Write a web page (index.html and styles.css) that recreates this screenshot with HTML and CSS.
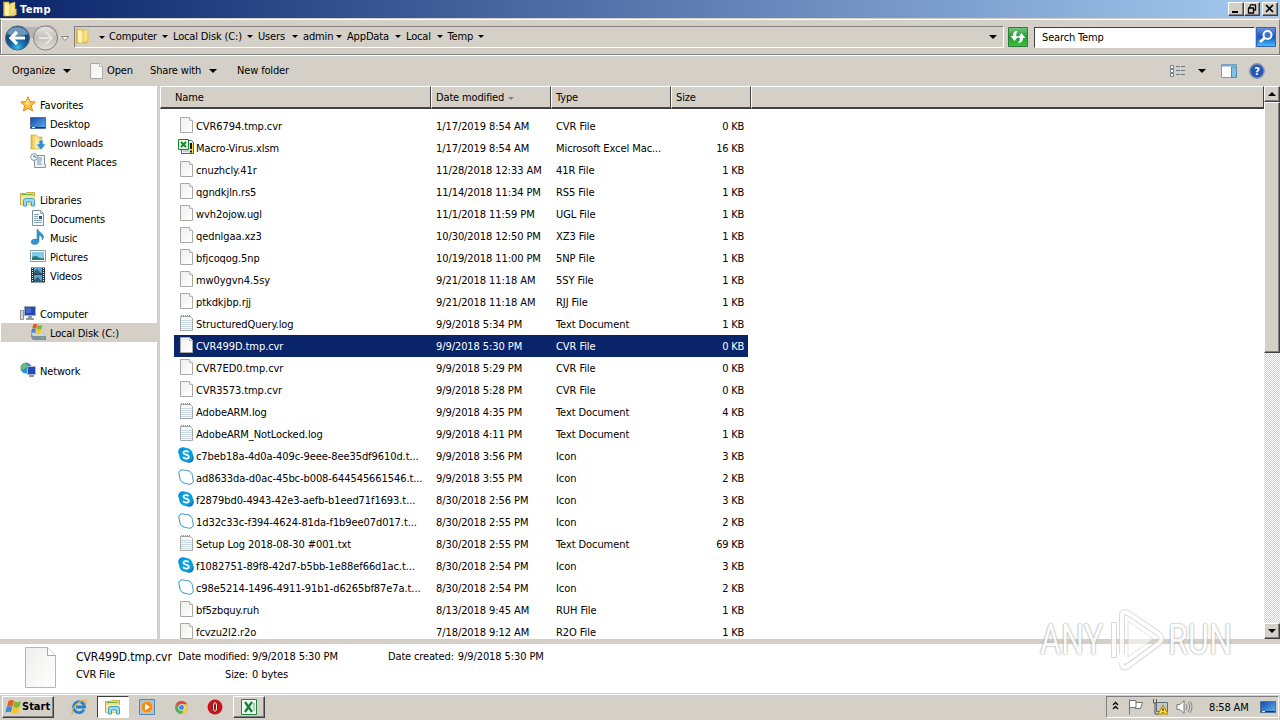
FILE: index.html
```html
<!DOCTYPE html>
<html lang="en">
<head>
  <meta charset="UTF-8">
  <title>Temp</title>
  <link rel="stylesheet" href="styles.css">
</head>
<body>
  <svg class="defs">
    <defs>
      <linearGradient id="gold"><stop offset="0" stop-color="#e3b93c"/><stop offset=".5" stop-color="#fff0a0"/><stop offset="1" stop-color="#dcb54a"/></linearGradient>
      <linearGradient id="screen" x2="1" y2="1"><stop offset="0" stop-color="#1746a8"/><stop offset="1" stop-color="#5eb3f2"/></linearGradient>
      <linearGradient id="paper" x2="1" y2="1"><stop offset="0" stop-color="#eeeeec"/><stop offset="1" stop-color="#fff"/></linearGradient>
      <radialGradient id="back" cy=".9"><stop offset="0" stop-color="#35c4ef"/><stop offset=".5" stop-color="#1b73b3"/><stop offset="1" stop-color="#164d82"/></radialGradient>
      <linearGradient id="glass" x2="0" y2="1"><stop offset="0" stop-color="#e8e6e3"/><stop offset=".5" stop-color="#c2beba"/><stop offset="1" stop-color="#e4e1dc"/></linearGradient>
      <linearGradient id="green" x2="0" y2="1"><stop offset="0" stop-color="#73c877"/><stop offset=".5" stop-color="#249b35"/><stop offset="1" stop-color="#39c636"/></linearGradient>
      <linearGradient id="blue" x2="0" y2="1"><stop offset="0" stop-color="#6e92e3"/><stop offset=".5" stop-color="#1756c5"/><stop offset="1" stop-color="#43c3f5"/></linearGradient>
    </defs>
    <symbol id="i-folder" viewBox="0 0 16 16"><path d="M1.500 1H7v2h5v12H1.500z" fill="url(#gold)" stroke="#c89d2f" stroke-width=".6"/><path d="M8 2.500l5-1.500v12l-5 2z" fill="#f6df7d" stroke="#d3ab40" stroke-width=".5"/><path d="M13 8l1.500-.5V14L11 15z" fill="#e8cc66"/><path d="M3 2l3 2v11l-3-1z" fill="#fff3b4"/></symbol>
    <symbol id="i-file" viewBox="0 0 16 16"><path d="M2.500.5h9l3 3v12h-12z" fill="url(#paper)" stroke="#a8a8a8"/><path d="M11.500.500v3h3" fill="#fff" stroke="#b6b6b6"/></symbol>
    <symbol id="i-log" viewBox="0 0 16 16"><path d="M2.500 1.500h10l2 2v12h-12z" fill="#f5f9fb" stroke="#a5a9aa"/><path d="M3 5.500h11M3 7.500h11M3 9.500h11M3 11.500h11M3 13.500h11" stroke="#cadbe3"/><path d="M3 1h9" stroke="#999" stroke-width="2" stroke-dasharray="1 1"/></symbol>
    <symbol id="i-skype" viewBox="0 0 16 16"><circle cx="5" cy="5" r="4.800" fill="#0a8fd8"/><circle cx="11" cy="11" r="4.800" fill="#0877bd"/><circle cx="8" cy="8" r="6.900" fill="#079fe0"/><path d="M10.800 5.200C9 3.500 5.300 4 5.500 6c.2 2 5.300 1.300 5.300 3.700 0 2.200-4 2.500-5.800.5" fill="none" stroke="#fff" stroke-width="1.800"/></symbol>
    <symbol id="i-skype-o" viewBox="0 0 16 16"><path d="M4.500.8c1.500 0 2 .7 4 .7 4 0 6 3 6 6.200 0 1.500.8 2.200.8 3.800 0 2.500-2 3.800-4 3.700-1.500 0-2-.7-4-.8C4 14 1.700 11.500 1.700 8 1.700 6.500.8 6 .8 4.300.8 2.200 2.500.8 4.500.8z" fill="#fff" stroke="#318bc4"/></symbol>
    <symbol id="i-xlsm" viewBox="0 0 16 16"><path d="M6.500 1.500h7l2 2v11h-12v-5z" fill="#e9f0fb" stroke="#49679d"/><path d="M8 5h6M8 8h6M5 12h9" stroke="#91acd4"/><path d="M.5.500h10v10H.5z" fill="#e3f5df" stroke="#16852b"/><path d="M3 3l5 5M8 3L3 8" stroke="#168532" stroke-width="1.800"/><path d="M11 4h4v10h-4z" fill="#ffe24f"/><path d="M13 4v6M13 11.500v2" stroke="#171717" stroke-width="2"/></symbol>
    <symbol id="i-star" viewBox="0 0 16 16"><path d="M8 .7l2.100 4.900 5.200.4-4 3.500 1.200 5.500L8 12.200 3.500 15l1.200-5.500L.7 6l5.200-.4z" fill="#ffc13b" stroke="#e48a18"/><path d="M8 3l1.500 4L8 10 5 7z" fill="#ffe68c"/></symbol>
    <symbol id="i-desktop" viewBox="0 0 16 16"><path d="M.5 2.500h15v11H.5z" fill="url(#screen)" stroke="#536e94"/><path d="M1 12.500h14" stroke="#17346c"/><path d="M2 12.500h3" stroke="#e6f1fb"/></symbol>
    <symbol id="i-download" viewBox="0 0 16 16"><path d="M1 1h6v2h5v12H1z" fill="url(#gold)" stroke="#c99d2e" stroke-width=".6"/><path d="M9 6h4v4h3l-5 6-5-6h3z" fill="#318dd4" stroke="#fff" stroke-width=".6"/></symbol>
    <symbol id="i-recent" viewBox="0 0 16 16"><path d="M4.500 2.500h10v9h1v3h-11z" fill="#edf2f4" stroke="#8295a0"/><path d="M7 5h5M7 7h5M7 9h4M7 11h5" stroke="#7c9bac"/><circle cx="4" cy="4" r="3.400" fill="#eef7fb" stroke="#8798a2"/><path d="M4 2v2h2" fill="none" stroke="#55748a"/></symbol>
    <symbol id="i-library" viewBox="0 0 16 16"><path d="M.5 2.500h5l1-1h8v12H.5z" fill="#f4dc77" stroke="#cda739"/><path d="M2 3.500h11" stroke="#6aae50"/><path d="M1 5.500h14v8H1z" fill="#fae99f"/><path d="M3.500 15V9.500q0-2 2-2h7q2 0 2 2V15h-3v-4h-5v4z" fill="#9ad8f5" stroke="#409fc9"/></symbol>
    <symbol id="i-doc" viewBox="0 0 16 16"><path d="M2.500.5h8l3 3v12h-11z" fill="#fbfdff" stroke="#7e8f9c"/><path d="M10.500.5v3h3M4 4.500h5M4 6.500h4M4 8.500h4M4 10.500h8M4 12.500h8" fill="none" stroke="#86a5bd"/><path d="M9 6h3v3H9z" fill="#275a92"/></symbol>
    <symbol id="i-music" viewBox="0 0 16 16"><path d="M8 .5c1 3.500 5.500 3.500 5.500 7.500 0 1-.5 2-1.500 3 .7-3-1-4.500-3-4.500V12c0 2.200-1.900 3.500-4.300 3.500S1 14.300 1.200 12.500c.3-2 3-3 5.800-2V.500z" fill="#3295d4" stroke="#1a70ae" stroke-width=".5"/></symbol>
    <symbol id="i-picture" viewBox="0 0 16 16"><path d="M.5 2.500h15v11H.5z" fill="#fff" stroke="#8c9aa1"/><path d="M2 4h12v8H2z" fill="#83cae9"/><path d="M2 9q4-2 6 0t6 1v2H2z" fill="#258070"/></symbol>
    <symbol id="i-video" viewBox="0 0 16 16"><path d="M1 .5h14v15H1z" fill="#263845"/><path d="M4 1h8v6H4zM4 8h8v7H4z" fill="#5aa5d2"/><path d="M4 5l3-3 5 5H4zM4 13l4-3 4 5H4z" fill="#315e78"/><path d="M2.500 1v14M13.500 1v14" stroke="#fff" stroke-dasharray="1 1"/></symbol>
    <symbol id="i-computer" viewBox="0 0 16 16"><path d="M.5 5.500h3v9h-3z" fill="#d2d7da" stroke="#89949a"/><path d="M4.500 1.500h11v9h-11z" fill="#2348b0" stroke="#a5abc4"/><path d="M6 3h5v5H6z" fill="#4967cb"/><path d="M8 11h4v2h2v2H6v-2h2z" fill="#929a9f"/></symbol>
    <symbol id="i-disk" viewBox="0 0 16 16"><path d="M1 9h12l3 3v4H3l-2-3z" fill="#7d919a"/><path d="M1 9h12l3 3H3z" fill="#ced5d7"/><path d="M11 14h3" stroke="#5de74f"/><use href="#i-flag" x="1" y="-1" width="12" height="12"/></symbol>
    <symbol id="i-flag" viewBox="0 0 16 16"><path d="M3 2q3-2 5.500 0L7 7.500q-2-1.500-5.500 0z" fill="#e75b21"/><path d="M9 2.500q3 1.500 6.500 0L14 8q-3 1.500-6.500 0z" fill="#7dba31"/><path d="M1.200 8q3-1.500 5.500 0L5.500 13.500Q3.500 12 0 13.500z" fill="#3f88d5"/><path d="M7.200 8.500q3 1.500 6.500 0L12.500 14q-3 1.500-6.500 0z" fill="#f8c529"/></symbol>
    <symbol id="i-network" viewBox="0 0 16 16"><circle cx="6" cy="6" r="5.500" fill="#3095c3"/><path d="M2 2l4-1 1 3-4 4-2-2z" fill="#70bd75"/><path d="M7.500 4.500h8v8h-8z" fill="#234db5" stroke="#b2b9cc"/><path d="M9 13h5v2H9z" fill="#8b949c"/></symbol>
  </svg>

  <div class="titlebar">
    <svg class="icon"><use href="#i-folder"/></svg>
    <span class="title">Temp</span>
    <div class="window-buttons">
      <span class="raised"><svg width="12" height="10"><path d="M2 8h6" stroke="#000" stroke-width="2"/></svg></span>
      <span class="raised"><svg width="12" height="10"><path d="M4 .8h6M4 3.500V1.500M9.500 1v5H8M2 4h6M2.500 4v5h5V4" fill="none" stroke="#000" stroke-width="1.300"/></svg></span>
      <span class="raised close"><svg width="12" height="10"><path d="M2 1l7 7M9 1L2 8" stroke="#000" stroke-width="1.700"/></svg></span>
    </div>
  </div>

  <div class="navbar">
    <svg class="nav-buttons" width="70" height="29" viewBox="0 0 70 29">
      <path d="M17 2q14 4 28 0 12 0 12 13H14z" fill="#b5b4b6"/>
      <circle cx="16.500" cy="15" r="12" fill="url(#back)" stroke="#4a6883"/>
      <path d="M6 11q2-7 10-7t11 7q-10 4-21 0z" fill="#9dbcd5" opacity=".65"/>
      <path d="M24 15H10m6-6l-6 6 6 6" fill="none" stroke="#fff" stroke-width="3.200"/>
      <circle cx="44.500" cy="15" r="12" fill="url(#glass)" stroke="#85817d"/>
      <path d="M38 15h13m-6-6l6 6-6 6" fill="none" stroke="#e7e5e2" stroke-width="2"/>
      <path d="M60.500 13.500h7l-3.500 4z" fill="#fff" stroke="#888"/>
    </svg>
    <div class="address">
      <svg class="icon"><use href="#i-folder"/></svg>
      <i class="arrow first"></i>
      <span class="crumb w55">Computer</span><span class="crumb w77">Local Disk (C:)</span><span class="crumb w37">Users</span><span class="crumb w37b">admin</span><span class="crumb w51">AppData</span><span class="crumb w34">Local</span><span class="crumb w34">Temp</span>
      <i class="arrow big"></i>
    </div>
    <svg class="refresh" width="20" height="20"><path d="M.5.500h19v19H.5z" fill="url(#green)" stroke="#347b3b"/><path d="M9.500 4Q5 3.500 5 9H2.500l4 5 4-5H8q0-3 1.500-5zM10 16q5 0 5-5h2.500l-4-5-4 5H12q0 3-2 5z" fill="#fff"/></svg>
    <div class="search">Search Temp</div>
    <svg class="search-button" width="20" height="20"><path d="M.5.500h19v19H.5z" fill="url(#blue)" stroke="#385eaf"/><circle cx="11.500" cy="8" r="4" fill="#3f75ca" stroke="#fff" stroke-width="2"/><path d="M8.500 11L4 15" stroke="#fff" stroke-width="2.600"/></svg>
  </div>

  <div class="toolbar">
    <span class="organize">Organize</span><i class="arrow big"></i>
    <svg class="icon open-icon"><use href="#i-file"/></svg><span class="open">Open</span>
    <span class="share">Share with</span><i class="arrow big"></i>
    <span class="new-folder">New folder</span>
    <div class="tools">
      <svg width="16" height="14"><path d="M.5 1.500h3v3h-3zM.5 5.500h3v3h-3zM.5 9.500h3v3h-3z" fill="#fff" stroke="#748087"/><path d="M6 2.500h4m1 0h4M6 6.500h4m1 0h4M6 10.500h4m1 0h4" stroke="#667984"/></svg>
      <i class="arrow big"></i>
      <svg class="pane-icon" width="17" height="14"><path d="M.5.500h15v13H.5z" fill="#fff" stroke="#6d9dbb"/><path d="M1 1.500h15" stroke="#75a9c8" stroke-width="2"/><path d="M10.500 3h5v10.500h-5z" fill="#80bfe2" stroke="#4c8fb5"/></svg>
      <svg class="help-icon" width="16" height="16"><circle cx="8" cy="8" r="7.200" fill="#2856b5" stroke="#8793ae" stroke-width="1.500"/><text x="8" y="12" text-anchor="middle">?</text></svg>
    </div>
  </div>

  <div class="main">
    <div class="sidebar">
      <div class="side-item"><svg class="icon"><use href="#i-star"/></svg><span>Favorites</span></div>
      <div class="side-item child"><svg class="icon"><use href="#i-desktop"/></svg><span>Desktop</span></div>
      <div class="side-item child"><svg class="icon"><use href="#i-download"/></svg><span>Downloads</span></div>
      <div class="side-item child"><svg class="icon"><use href="#i-recent"/></svg><span>Recent Places</span></div>
      <div class="side-item group"><svg class="icon"><use href="#i-library"/></svg><span>Libraries</span></div>
      <div class="side-item child"><svg class="icon"><use href="#i-doc"/></svg><span>Documents</span></div>
      <div class="side-item child"><svg class="icon"><use href="#i-music"/></svg><span>Music</span></div>
      <div class="side-item child"><svg class="icon"><use href="#i-picture"/></svg><span>Pictures</span></div>
      <div class="side-item child"><svg class="icon"><use href="#i-video"/></svg><span>Videos</span></div>
      <div class="side-item group"><svg class="icon"><use href="#i-computer"/></svg><span>Computer</span></div>
      <div class="side-item child active"><svg class="icon"><use href="#i-disk"/></svg><span>Local Disk (C:)</span></div>
      <div class="side-item group"><svg class="icon"><use href="#i-network"/></svg><span>Network</span></div>
    </div>
    <div class="content">
      <div class="columns">
        <div class="col name">Name</div><div class="col date">Date modified<i class="arrow sort"></i></div><div class="col type">Type</div><div class="col size">Size</div><div class="col rest"></div>
      </div>
      <div class="rows" id="rows"></div>
    </div>
    <div class="scrollbar">
      <span class="raised"><i class="arrow up"></i></span>
      <span class="raised thumb"></span>
      <span class="track"></span>
      <span class="raised"><i class="arrow big"></i></span>
    </div>
  </div>

  <div class="details">
    <svg class="big-file" width="32" height="41"><path d="M.5.500h22l8 8v32H.5z" fill="url(#paper)" stroke="#b5b5b5"/><path d="M22.500.500v8h8" fill="#fff" stroke="#aaa"/></svg>
    <div class="detail-name"><div class="file-title">CVR499D.tmp.cvr</div><div>CVR File</div></div>
    <div class="detail-labels"><div>Date modified:</div><div>Size:</div></div>
    <div class="detail-values"><div>9/9/2018 5:30 PM</div><div>0 bytes</div></div>
    <div class="detail-created">Date created: <span>9/9/2018 5:30 PM</span></div>
  </div>

  <div class="taskbar">
    <div class="start raised"><svg width="17" height="16"><use href="#i-flag"/></svg><b>Start</b></div>
    <div class="task"><svg width="16" height="16"><path d="M13 10.500A5.500 5.500 0 1 1 13.500 8H5" fill="none" stroke="#2680ce" stroke-width="2.800"/><path d="M1.500 15C-1 10 10-1 15 2q1 1-1 4" fill="none" stroke="#e3b33d" stroke-width="1.300"/></svg></div>
    <div class="task pressed"><svg class="icon"><use href="#i-library"/></svg></div>
    <div class="task"><svg width="16" height="16"><path d="M.5.500h15v15H.5z" fill="#9bc6e6" stroke="#5287b7"/><circle cx="8" cy="8" r="6" fill="#f58b17" stroke="#fbc27d"/><path d="M6 4.500l5 3.500-5 3.500z" fill="#fff"/></svg></div>
    <div class="task"><svg width="13" height="13" viewBox="0 0 16 16"><circle cx="8" cy="8" r="8" fill="#4daf51"/><path d="M1 4a8 8 0 0 1 14 0H8L5 8z" fill="#e54b3c"/><path d="M15 4a8 8 0 0 1-7 12l4-8-2-4z" fill="#f9cc35"/><circle cx="8" cy="8" r="3.700" fill="#4387ea" stroke="#fff"/></svg></div>
    <div class="task"><svg width="16" height="16"><circle cx="8" cy="8" r="7.500" fill="#c9151c"/><ellipse cx="8" cy="8" rx="2.500" ry="5.200" fill="#fff" stroke="#80090d"/><ellipse cx="8" cy="8" rx="1" ry="4" fill="#8c1015"/></svg></div>
    <div class="task excel raised"><svg width="16" height="16"><path d="M.5.500h15v15H.5z" fill="#effaef" stroke="#26823c"/><path d="M4 3l7 10M11 3L4 13" stroke="#168237" stroke-width="2.300"/><path d="M13 4v8" stroke="#5eaf6a"/></svg></div>
    <div class="tray">
      <svg class="chevrons" width="7" height="10"><path d="M1 4l2.500-2.500L6 4M1 8l2.500-2.500L6 8" fill="none" stroke="#000" stroke-width="1.300"/></svg>
      <svg class="tray-flag" width="16" height="16"><path d="M1.500.500v15M2 1.500h6v7H2M8 3.500h6.500l-2 6H7" fill="#fff" stroke="#77736e"/></svg>
      <svg class="tray-net" width="17" height="16"><path d="M4.500 3.500h11v9h-11z" fill="#bfc8cc" stroke="#606b73"/><path d="M1.500 0v4h3V0M3 4v11h4" fill="none" stroke="#555"/><path d="M10 6l5 9H5z" transform="translate(1)" fill="#ffdc21" stroke="#b58500"/><path d="M11 9v3M11 13v1" stroke="#222"/></svg>
      <svg class="tray-sound" width="17" height="14"><path d="M1 4.500h3l4-4v13l-4-4H1z" fill="#fff" stroke="#777"/><path d="M10 4q2 3 0 6M12 2q3.500 5 0 10M14 1q4 6 0 12" fill="none" stroke="#888"/></svg>
      <span class="clock">8:58 AM</span>
      <svg class="icon"><use href="#i-desktop"/></svg>
    </div>
  </div>

  <div class="watermark">
    <span>ANY</span>
    <svg width="58" height="64"><path d="M7 50V14M15 46V8q0-6 6-3l31 21q5 5 0 9L21 58q-6 4-6-3" fill="none" stroke="#d2d2d2" stroke-width="6"/><path d="M7 49V15M15 46V8q0-6 6-3l31 21q5 5 0 9L21 58q-6 4-6-3" fill="none" stroke="#fff" stroke-width="4"/><path d="M21 13l25 18-25 18z" fill="#fff" fill-opacity=".7" stroke="#ddd"/></svg>
    <span>RUN</span>
  </div>

  <script>
    const files = [
      ['file', 'CVR6794.tmp.cvr', '1/17/2019 8:54 AM', 'CVR File', 0],
      ['xlsm', 'Macro-Virus.xlsm', '1/17/2019 8:54 AM', 'Microsoft Excel Mac...', 16],
      ['file', 'cnuzhcly.41r', '11/28/2018 12:33 AM', '41R File', 1],
      ['file', 'qgndkjln.rs5', '11/14/2018 11:34 PM', 'RS5 File', 1],
      ['file', 'wvh2ojow.ugl', '11/1/2018 11:59 PM', 'UGL File', 1],
      ['file', 'qednlgaa.xz3', '10/30/2018 12:50 PM', 'XZ3 File', 1],
      ['file', 'bfjcoqog.5np', '10/19/2018 11:00 PM', '5NP File', 1],
      ['file', 'mw0ygvn4.5sy', '9/21/2018 11:18 AM', '5SY File', 1],
      ['file', 'ptkdkjbp.rjj', '9/21/2018 11:18 AM', 'RJJ File', 1],
      ['log', 'StructuredQuery.log', '9/9/2018 5:34 PM', 'Text Document', 1],
      ['file', 'CVR499D.tmp.cvr', '9/9/2018 5:30 PM', 'CVR File', 0],
      ['file', 'CVR7ED0.tmp.cvr', '9/9/2018 5:29 PM', 'CVR File', 0],
      ['file', 'CVR3573.tmp.cvr', '9/9/2018 5:28 PM', 'CVR File', 0],
      ['log', 'AdobeARM.log', '9/9/2018 4:35 PM', 'Text Document', 4],
      ['log', 'AdobeARM_NotLocked.log', '9/9/2018 4:11 PM', 'Text Document', 1],
      ['skype', 'c7beb18a-4d0a-409c-9eee-8ee35df9610d.t...', '9/9/2018 3:56 PM', 'Icon', 3],
      ['skype-o', 'ad8633da-d0ac-45bc-b008-644545661546.t...', '9/9/2018 3:55 PM', 'Icon', 2],
      ['skype', 'f2879bd0-4943-42e3-aefb-b1eed71f1693.t...', '8/30/2018 2:56 PM', 'Icon', 3],
      ['skype-o', '1d32c33c-f394-4624-81da-f1b9ee07d017.t...', '8/30/2018 2:55 PM', 'Icon', 2],
      ['log', 'Setup Log 2018-08-30 #001.txt', '8/30/2018 2:55 PM', 'Text Document', 69],
      ['skype', 'f1082751-89f8-42d7-b5bb-1e88ef66d1ac.t...', '8/30/2018 2:54 PM', 'Icon', 3],
      ['skype-o', 'c98e5214-1496-4911-91b1-d6265bf87e7a.t...', '8/30/2018 2:54 PM', 'Icon', 2],
      ['file', 'bf5zbquy.ruh', '8/13/2018 9:45 AM', 'RUH File', 1],
      ['file', 'fcvzu2l2.r2o', '7/18/2018 9:12 AM', 'R2O File', 1]
    ];
    const selected = 10;

    document.getElementById('rows').innerHTML = files.map(([icon, name, date, type, size], i) => `
      <div class="row${i === selected ? ' selected' : ''}">
        <svg class="icon"><use href="#i-${icon}"/></svg>
        <span class="cell-name">${name}</span>
        <span class="cell-date">${date}</span>
        <span class="cell-type">${type}</span>
        <span class="cell-size">${size} KB</span>
      </div>`).join('');
  </script>
</body>
</html>
```
FILE: styles.css
```css
* { box-sizing: border-box; }
body {
  margin: 0;
  width: 1280px;
  height: 720px;
  overflow: hidden;
  display: flex;
  flex-direction: column;
  background: #d4d0c8;
  color: #000;
  font-family: "DejaVu Sans Condensed", "DejaVu Sans", sans-serif;
  font-stretch: condensed;
  font-size: 11px;
  letter-spacing: -0.15px;
  line-height: 14px;
  white-space: nowrap;
}
svg { flex: none; display: block; }
.defs { position: absolute; width: 0; height: 0; }
.icon { width: 16px; height: 16px; }
.raised { background: #d4d0c8; border: 1px solid; border-color: #fff #404040 #404040 #fff; box-shadow: inset -1px -1px #808080; }
.arrow { flex: none; border: 3px solid transparent; border-top-color: #000; border-bottom: 0; width: 6px; height: 3px; }
.arrow.big { border-width: 4px 4px 0; width: 8px; height: 4px; }
.arrow.up { border: 4px solid transparent; border-bottom-color: #000; border-top: 0; width: 8px; height: 4px; }
.arrow.sort { border-top-color: #808080; margin-left: 4px; }

/* title bar */
.titlebar { height: 18px; flex: none; display: flex; align-items: center; padding-left: 2px; background: linear-gradient(to right, #0a246a, #a6caf0); }
.title { color: #fff; font-weight: bold; margin-left: 2px; padding-top: 1px; letter-spacing: 0.4px; }
.window-buttons { display: flex; margin-left: auto; padding-right: 2px; }
.window-buttons .raised { width: 16px; height: 14px; padding: 1px; }
.window-buttons .close { margin-left: 2px; }

/* navigation */
.navbar { height: 36px; flex: none; display: flex; align-items: center; border: 1px solid #808080; border-color: #fff #808080 #808080; box-shadow: inset 0 1px #d4d0c8, inset 1px 1px #fff; margin-top: 1px; }
.address { display: flex; align-items: center; width: 930px; height: 22px; margin-left: 3px; border: 1px solid #808080; border-color: #808080 #fff #fff #808080; }
.address .icon { margin-top: -2px; }
.address .first { margin-left: 8px; margin-right: 4px; }
.crumb { display: flex; flex: none; align-items: center; justify-content: space-between; margin-right: 5px; margin-top: -1px; }
.crumb::after { content: ""; border: 3px solid transparent; border-top-color: #000; border-bottom: 0; }
.w55 { width: 59px; }
.w77 { width: 80px; }
.w37 { width: 40px; }
.w37b { width: 39px; }
.w51 { width: 54px; }
.w34 { width: 36.500px; }
.address .big { margin-left: auto; margin-right: 6px; }
.refresh { margin-left: 4px; }
.search { width: 221px; height: 21px; margin-left: 6px; padding: 3px 7px; background: #fff; border: 1px solid; border-color: #404040 #fff #fff #404040; }
.search-button { margin-left: 1px; }

/* command bar */
.toolbar { height: 31px; flex: none; display: flex; align-items: center; padding-left: 12px; border-top: 1px solid #fff; }
.organize { width: 51px; }
.open-icon { margin-left: 17px; }
.open { width: 43px; margin-left: 3px; }
.share { width: 59px; }
.new-folder { margin-left: 20px; }
.tools { display: flex; align-items: center; margin-left: auto; padding-right: 15px; margin-top: -1px; }
.tools .arrow { margin-left: 12px; }
.pane-icon { margin-left: 15px; }
.help-icon { margin-left: 11px; }
.help-icon text { fill: #fff; font-size: 11px; font-weight: bold; }

/* folder tree and list */
.main { height: 553px; flex: none; display: flex; }
.sidebar { width: 157px; background: #fff; padding-top: 9px; }
.side-item { height: 19px; display: flex; align-items: center; gap: 4px; padding-left: 20px; }
.side-item span { padding-top: 2px; }
.side-item .icon { margin-top: -1px; }
.side-item.child { padding-left: 30px; }
.side-item.group { margin-top: 19px; }
.side-item.active { background: #d4d0c8; margin-left: 1px; padding-left: 29px; }
.content { flex: 1; overflow: hidden; margin-left: 3px; background: #fff; }
.columns { display: flex; height: 23px; background: #d4d0c8; }
.col { height: 23px; display: flex; align-items: center; padding: 2px 0 0 4px; border: 1px solid; border-color: #fff #404040 #404040 #fff; border-bottom-width: 2px; }
.col.name { width: 271px; padding-left: 14px; }
.col.date { width: 120px; }
.col.type { width: 120px; }
.col.size { width: 80px; }
.col.rest { flex: 1; }
.rows { padding: 6px 0 0 14px; letter-spacing: -0.08px; }
.row { width: 574px; height: 22px; display: flex; align-items: center; padding-left: 4px; }
.row.selected { background: #0a246a; color: #fff; }
.row .icon { margin-top: -2px; }
.row span { padding-top: 2px; }
.cell-name { width: 240px; padding-left: 2px; }
.cell-date { width: 120px; padding-left: 2px; }
.cell-type { width: 120px; padding-left: 2px; }
.cell-size { width: 70px; text-align: right; letter-spacing: -0.25px; }
.scrollbar { width: 16px; display: flex; flex-direction: column; }
.scrollbar .raised { height: 16px; display: flex; align-items: center; justify-content: center; }
.scrollbar .thumb { height: 251px; }
.track { flex: 1; background: repeating-conic-gradient(#fff 0 25%, #d4d0c8 0 50%) 0 0 / 2px 2px; }

/* details pane */
.details { height: 54px; flex: none; display: flex; background: #fff; border-top: 5px solid #d4d0c8; padding-top: 4px; line-height: 18px; }
.big-file { margin: -1px 19px 0 25px; }
.detail-name { width: 102px; }
.file-title { font-size: 12px; letter-spacing: -0.05px; }
.detail-labels { width: 70px; text-align: right; }
.detail-values { width: 140px; padding-left: 4px; }
.detail-values, .detail-created span { letter-spacing: -0.1px; }
.detail-created span { padding-left: 1px; }

/* taskbar */
.taskbar { flex: 1; display: flex; align-items: center; padding-left: 2px; border-top: 1px solid #d4d0c8; box-shadow: inset 0 1px #fff; }
.start { width: 52px; height: 22px; display: flex; align-items: center; padding-left: 2px; margin-right: 9px; }
.start b { letter-spacing: 0; }
.task { width: 32px; height: 22px; display: flex; align-items: center; justify-content: center; margin-right: 2px; }
.pressed { background: #fff; border: 1px solid; border-color: #404040 #fff #fff #404040; }
.excel { margin-left: 0; }
.tray { width: 173px; height: 22px; margin-left: auto; margin-right: 1px; display: flex; align-items: center; border: 1px solid; border-color: #808080 #fff #fff #808080; }
.chevrons { margin-left: 5px; margin-top: -3px; }
.tray-flag { margin-left: 9px; }
.tray-net { margin-left: 8px; }
.tray-sound { margin-left: 7px; }
.clock { width: 41px; margin: 0 10px 0 16px; padding-top: 1px; }

/* translucent logo over the lower right corner */
.watermark { position: absolute; left: 1040px; top: 608px; display: flex; align-items: center; gap: 7px; font: 400 42px/64px Roboto, sans-serif; letter-spacing: 0; color: #fff; opacity: .8; text-shadow: 0 0 2px #888, 0 0 2px #aaa; }
.watermark span { width: 60px; transform: scaleX(.77); transform-origin: left; }
.watermark svg { margin-right: -4px; }
```
